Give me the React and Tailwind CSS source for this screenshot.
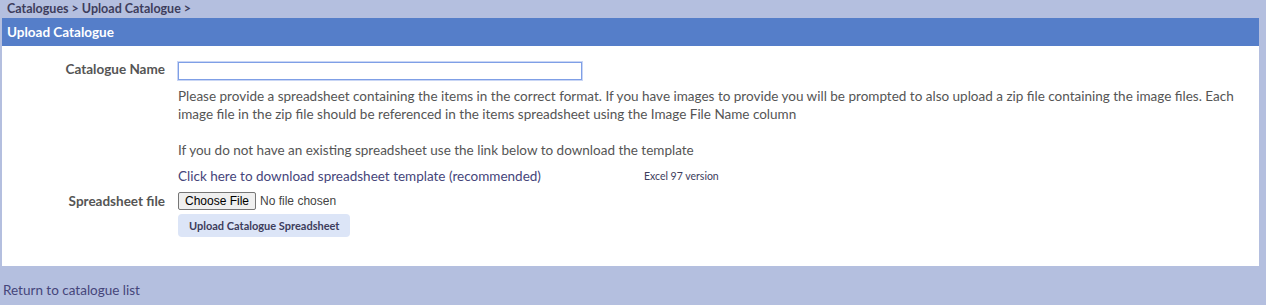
const App = () => {
  return (
    <div className="w-[1266px] h-[305px] bg-[#b4bfdf] text-[#555] font-['Lato','Open_Sans',sans-serif] overflow-hidden">
      {/* Breadcrumb */}
      <div className="h-[18px] px-[7px] flex items-center text-[12.5px] font-bold text-[#3d3d5c] leading-none">
        <span>Catalogues</span>
        <span className="mx-[3px]">&gt;</span>
        <span>Upload Catalogue</span>
        <span className="ml-[3px]">&gt;</span>
      </div>

      <div className="mx-[2px] w-[1257px]">
        <div className="h-[28px] bg-[#557ec9] px-[5px] flex items-center text-white font-bold text-[13.5px]">
          Upload Catalogue
        </div>

        <div className="bg-white h-[220px] pt-[14px] grid grid-cols-[163px_1fr] gap-x-[13px] content-start text-[13.5px]">
          <div className="text-right font-bold h-[18px] flex items-center justify-end">Catalogue Name</div>
          <div>
            <input
              type="text"
              className="w-[404px] h-[18px] border border-[#7f9fe6] outline-none px-[2px] text-[13px] shadow-[0_0_0_1px_#c9d6f5]"
              autoFocus
            />
          </div>

          <div></div>
          <div className="pt-[7px] pr-[20px] leading-[18px]">
            <p>
              Please provide a spreadsheet containing the items in the correct format. If you have images to provide you will be prompted to also upload a zip file containing the image files. Each image file in the zip file should be referenced in the items spreadsheet using the Image File Name column
            </p>
            <p className="mt-[18px]">If you do not have an existing spreadsheet use the link below to download the template</p>
            <div className="mt-[8px] flex items-center text-[#45457a]">
              <a className="cursor-pointer">Click here to download spreadsheet template (recommended)</a>
              <a className="ml-[103px] text-[10.5px] cursor-pointer text-[#3d3d5c]">Excel 97 version</a>
            </div>
          </div>

          <div className="text-right font-bold mt-[7px] h-[18px] flex items-center justify-end">Spreadsheet file</div>
          <div className="mt-[7px] flex items-center h-[18px] font-['Liberation_Sans',sans-serif] text-[12px] text-black">
            <button className="h-[18px] px-[6px] border border-[#767676] rounded-[2px] bg-[#efefef] leading-none">
              Choose File
            </button>
            <span className="ml-[4px] text-[#444]">No file chosen</span>
          </div>

          <div></div>
          <div className="mt-[4px]">
            <button className="h-[23px] px-[11px] rounded-[4px] bg-[#dce5f7] text-[11px] font-bold text-[#3d3d5c]">
              Upload Catalogue Spreadsheet
            </button>
          </div>
        </div>
      </div>

      <div className="px-[3px] pt-[14px] text-[13.5px] text-[#45457a]">
        <a className="cursor-pointer">Return to catalogue list</a>
      </div>
    </div>
  );
};

export default App;
